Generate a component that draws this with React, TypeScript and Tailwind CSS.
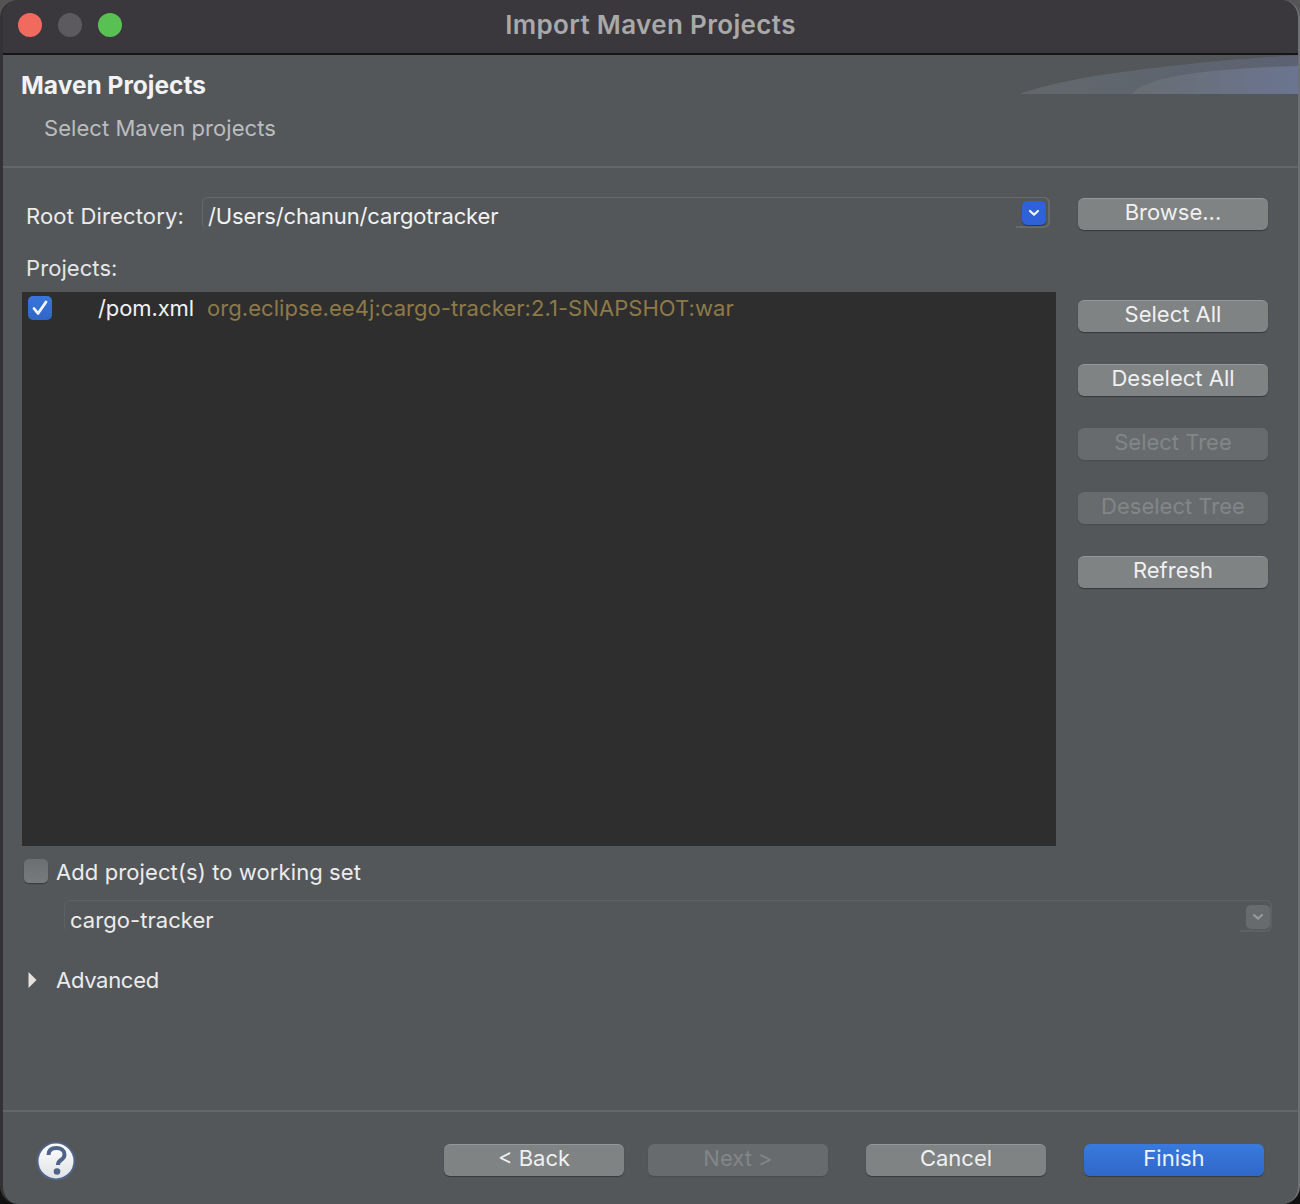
const font = "font-['Inter','Liberation_Sans',sans-serif]";

function Btn({ label, kind = "normal", className = "" }: { label: string; kind?: "normal" | "disabled" | "primary"; className?: string }) {
  const k =
    kind === "primary"
      ? "bg-gradient-to-b from-[#3a7ade] to-[#2f68c8] text-[#eef3fb] pt-px shadow-[0_1px_1px_rgba(0,0,0,0.35)]"
      : kind === "disabled"
        ? "bg-[#676b6d] text-[#828688] pt-px shadow-[0_1px_1px_rgba(0,0,0,0.12)]"
        : "bg-[#7f8384] text-[#f0f0f0] border-t border-t-[#94989a] shadow-[0_1px_1px_rgba(0,0,0,0.35)]";
  return (
    <div className={`flex h-8 items-start justify-center rounded-[6px] text-[22px] leading-[26px] ${k} ${className}`}>
      {label}
    </div>
  );
}

function Chevron({ color }: { color: string }) {
  return (
    <svg width="12" height="8" viewBox="0 0 12 8" fill="none">
      <path d="M2 2l4 3.6L10 2" stroke={color} strokeWidth="2.2" strokeLinecap="round" strokeLinejoin="round" />
    </svg>
  );
}

export default function App() {
  return (
    <div className={`${font} h-[1204px] w-[1300px] overflow-hidden bg-gradient-to-b from-[#555555] to-[#111111]`}>
      <div className="flex h-full flex-col overflow-hidden rounded-[18px] border-l-[3px] border-r-2 border-l-[#333335] border-r-[#6f7274] bg-[#53575a]">
        {/* Title bar */}
        <div className="relative flex h-[55px] shrink-0 items-center justify-center border-b-2 border-[#161617] bg-[#3a383c]">
          <div className="absolute left-[15px] top-[13px] flex gap-[16px]">
            <span className="h-6 w-6 rounded-full bg-[#f16a5e]" />
            <span className="h-6 w-6 rounded-full bg-[#5c5a5f]" />
            <span className="h-6 w-6 rounded-full bg-[#59c153]" />
          </div>
          <span className="-mt-[4px] text-[26px] font-semibold leading-[28px] tracking-[0.35px] text-[#a9a9aa]">Import Maven Projects</span>
        </div>

        {/* Banner */}
        <div className="relative h-[113px] shrink-0 border-b-2 border-[#63676a] pl-[18px]">
          <svg className="absolute right-0 top-0" width="278" height="39" viewBox="0 0 278 39" fill="none">
            <defs>
              <linearGradient id="g1" x1="0" x2="1" y1="0" y2="0">
                <stop offset="0" stopColor="#62686b" />
                <stop offset="1" stopColor="#5c6272" />
              </linearGradient>
              <linearGradient id="g2" x1="0" x2="1" y1="0" y2="0">
                <stop offset="0" stopColor="#686d72" />
                <stop offset="1" stopColor="#6b7590" />
              </linearGradient>
            </defs>
            <path d="M0 39C40 24 130 10 278 0V39Z" fill="url(#g1)" />
            <path d="M112 39C124 24 170 14 278 11V39Z" fill="url(#g2)" />
          </svg>
          <div className="pt-[14px] text-[24.5px] font-bold leading-[32px] text-[#f2f2f2]">Maven Projects</div>
          <div className="pl-[23px] pt-[13px] text-[22px] leading-[28px] tracking-[0.05px] text-[#bbbdbe]">Select Maven projects</div>
        </div>

        {/* Main content */}
        <div className="flex-1 px-[19px]">
          <div className="flex">
            <div className="w-[1034px]">
              <div className="mt-[29px] flex h-[32px] items-start">
                <span className="ml-[4px] mt-[5px] w-[176px] text-[22px] leading-[28px] tracking-[0.16px] text-[#ececec]">Root Directory:</span>
                <div className="flex h-[32px] w-[848px] justify-between rounded-[6px] border-t border-l border-[#65696c]">
                  <span className="pl-[5px] pt-[4px] text-[22px] leading-[28px] tracking-[-0.15px] text-[#f2f2f2]">/Users/chanun/cargotracker</span>
                  <span className="-mt-px flex h-[31px] w-[34px] items-start justify-start rounded-br-[6px] rounded-tr-[6px] border-b-2 border-r-2 border-t border-[#676b6e] pl-[6px] pt-[3px]">
                    <span className="flex h-6 w-6 items-center justify-center rounded-[5px] bg-[#2e62d6] shadow-[0_1px_1px_rgba(0,0,0,0.4)]">
                      <Chevron color="#f2f5fc" />
                    </span>
                  </span>
                </div>
              </div>
              <div className="ml-[4px] mt-[25px] text-[22px] leading-[28px] tracking-[0.08px] text-[#e6e6e6]">Projects:</div>
              <div className="mt-[10px] h-[554px] w-[1034px] bg-[#2e2e2e] pl-[6px] pt-[2px]">
                <div className="flex items-center">
                  <span className="flex h-6 w-6 items-center justify-center rounded-[5px] bg-gradient-to-b from-[#3876dc] to-[#2f66c6]">
                    <svg width="18" height="16" viewBox="0 0 18 16" fill="none">
                      <path d="M3 8.5l4 5L15 2" stroke="#f4f7fc" strokeWidth="2.8" strokeLinecap="round" strokeLinejoin="round" />
                    </svg>
                  </span>
                  <span className="ml-[46px] text-[22px] leading-[28px] tracking-[-0.1px] text-[#f2f2f2]">/pom.xml</span>
                  <span className="ml-[13px] text-[22px] leading-[28px] tracking-[0.06px] text-[#8d7a48]">org.eclipse.ee4j:cargo-tracker:2.1-SNAPSHOT:war</span>
                </div>
              </div>
            </div>
            <div className="ml-[22px] w-[190px] pt-[30px]">
              <Btn label="Browse..." />
              <Btn label="Select All" className="mt-[70px]" />
              <Btn label="Deselect All" className="mt-8" />
              <Btn label="Select Tree" kind="disabled" className="mt-8" />
              <Btn label="Deselect Tree" kind="disabled" className="mt-8" />
              <Btn label="Refresh" className="mt-8" />
            </div>
          </div>

          <div className="mt-[12px] flex items-center">
            <span className="mb-[2px] ml-[2px] h-6 w-6 rounded-[5px] bg-gradient-to-b from-[#6b6f71] to-[#777b7c] shadow-[0_1px_1px_rgba(0,0,0,0.35)]" />
            <span className="ml-[8px] text-[22px] leading-[28px] tracking-[0.1px] text-[#ececec]">Add project(s) to working set</span>
          </div>

          <div className="ml-[42px] mt-[14px] flex h-[32px] w-[1208px] justify-between rounded-[6px] border-t border-l border-[#5d6164]">
            <span className="pl-[5px] pt-[5px] text-[22px] leading-[28px] tracking-[0.05px] text-[#ececec]">cargo-tracker</span>
            <span className="-mt-px flex h-[32px] w-[32px] items-start justify-start rounded-br-[6px] rounded-tr-[6px] border-b-2 border-r-2 border-t border-[#5d6164] pl-[6px] pt-[4px]">
              <span className="flex h-6 w-6 items-center justify-center rounded-[5px] bg-[#676b6d]">
                <Chevron color="#96999b" />
              </span>
            </span>
          </div>

          <div className="mt-[34px] flex items-center">
            <svg className="ml-[6px]" width="9" height="18" viewBox="0 0 9 18">
              <path d="M0.5 1L8.5 9L0.5 17Z" fill="#e6e2dc" />
            </svg>
            <span className="ml-[19px] text-[22px] leading-[28px] tracking-[-0.3px] text-[#ececec]">Advanced</span>
          </div>
        </div>

        {/* Footer */}
        <div className="flex h-[94px] shrink-0 items-start border-t-2 border-[#63676a] pt-[32px]">
          <svg className="ml-[33px] mt-[-3px]" width="40" height="40" viewBox="0 0 40 40">
            <defs>
              <linearGradient id="h" x1="0" x2="0" y1="0" y2="1">
                <stop offset="0" stopColor="#ffffff" />
                <stop offset="1" stopColor="#dfe1e4" />
              </linearGradient>
            </defs>
            <circle cx="20" cy="20" r="18.5" fill="url(#h)" stroke="#4f6488" strokeWidth="2" />
            <path d="M12.5 14c0-5 3.5-7 8-7 4.7 0 8 2.6 8 6.5 0 3-1.8 4.5-3.8 5.8-1.9 1.2-2.7 2-2.7 4.7" fill="none" stroke="#4f6488" strokeWidth="4" />
            <circle cx="21" cy="30.5" r="3.3" fill="#4f6488" />
          </svg>
          <Btn label="< Back" className="ml-[368px] w-[180px]" />
          <Btn label="Next >" kind="disabled" className="ml-[24px] w-[180px]" />
          <Btn label="Cancel" className="ml-[38px] w-[180px]" />
          <Btn label="Finish" kind="primary" className="ml-[38px] w-[180px]" />
        </div>
      </div>
    </div>
  );
}
